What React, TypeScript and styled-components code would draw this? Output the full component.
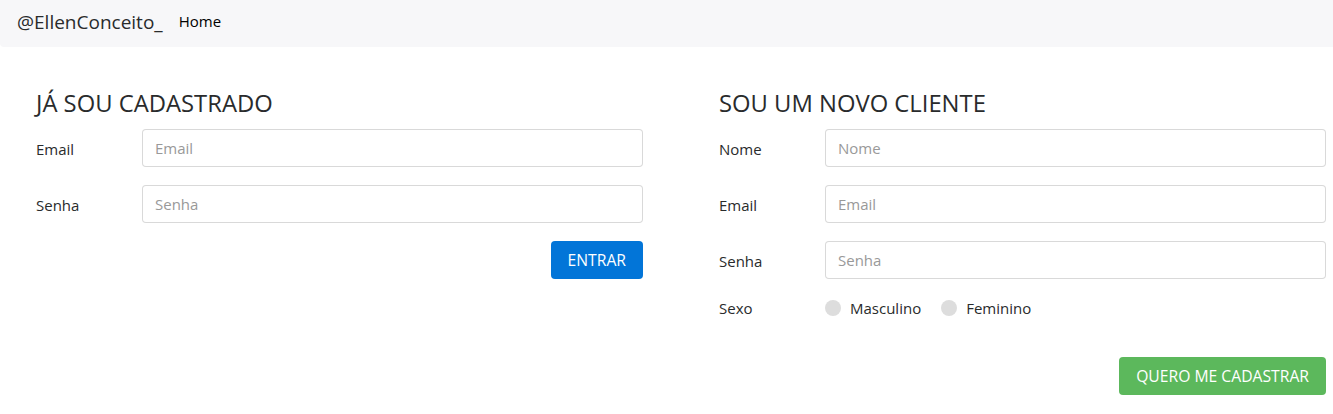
import React from "react";
import styled, { createGlobalStyle } from "styled-components";

const Global = createGlobalStyle`
  html, body { margin: 0; padding: 0; background: #fff; }
  body {
    font-family: "Open Sans", "Noto Sans", sans-serif;
    font-size: 15px;
    color: #292b2c;
  }
  * { box-sizing: border-box; }
`;

const Navbar = styled.nav`
  display: flex;
  align-items: center;
  height: 47px;
  padding: 0 0 0 17px;
  margin-right: -8px;
  background: #f7f7f9;
  border-radius: 0 0 4px 4px;
`;

const Brand = styled.a`
  font-size: 19px;
  color: #292b2c;
  margin-right: 16px;
  text-decoration: none;
  padding-bottom: 4px;
`;

const NavLink = styled.a`
  font-size: 15px;
  color: #000;
  text-decoration: none;
  padding-bottom: 5px;
`;

const Main = styled.main`
  display: grid;
  grid-template-columns: 1fr 1fr;
  column-gap: 76px;
  padding: 42px 7px 0 36px;
`;

const Column = styled.section`
  display: flex;
  flex-direction: column;
`;

const Title = styled.h2`
  margin: 0 0 12px;
  font-size: 23.8px;
  font-weight: 400;
  line-height: 28px;
  color: #292b2c;
`;

const Row = styled.div`
  display: flex;
  align-items: center;
  margin-bottom: 18px;
`;

const Label = styled.label<{ $pad?: number }>`
  flex: 0 0 106px;
  padding-top: ${(p) => (p.$pad ?? 1)}px;
  font-size: 15px;
  color: #292b2c;
`;

const Input = styled.input`
  flex: 1;
  height: 38px;
  padding: 0 12px;
  border: 1px solid rgba(0, 0, 0, 0.15);
  border-radius: 4px;
  font: inherit;
  font-size: 15px;
  color: #464a4c;
  &::placeholder { color: #999; }
`;

const Actions = styled.div<{ $top: number }>`
  display: flex;
  justify-content: flex-end;
  margin-top: ${(p) => p.$top}px;
`;

const Button = styled.button<{ $color: string }>`
  height: 38px;
  padding: 0 17px;
  border: none;
  border-radius: 4px;
  background: ${(p) => p.$color};
  color: #fff;
  font: inherit;
  font-size: 15.7px;
  cursor: pointer;
`;

const Radios = styled.div`
  display: flex;
  align-items: center;
  gap: 20px;
`;

const RadioOption = styled.label`
  display: flex;
  align-items: center;
  gap: 9px;
  font-size: 15px;
  color: #292b2c;
`;

const Dot = styled.span`
  width: 16px;
  height: 16px;
  border-radius: 50%;
  background: #ddd;
`;

const SexRow = styled(Row)`
  height: 22px;
  margin-bottom: 0;
`;

export default function App() {
  return (
    <>
      <Global />
      <Navbar>
        <Brand href="#">@EllenConceito_</Brand>
        <NavLink href="#">Home</NavLink>
      </Navbar>
      <Main>
        <Column>
          <Title>JÁ SOU CADASTRADO</Title>
          <Row>
            <Label>Email</Label>
            <Input placeholder="Email" />
          </Row>
          <Row>
            <Label>Senha</Label>
            <Input placeholder="Senha" type="password" />
          </Row>
          <Actions $top={0}>
            <Button $color="#0275d8">ENTRAR</Button>
          </Actions>
        </Column>
        <Column>
          <Title>SOU UM NOVO CLIENTE</Title>
          <Row>
            <Label>Nome</Label>
            <Input placeholder="Nome" />
          </Row>
          <Row>
            <Label>Email</Label>
            <Input placeholder="Email" />
          </Row>
          <Row>
            <Label>Senha</Label>
            <Input placeholder="Senha" type="password" />
          </Row>
          <SexRow>
            <Label $pad={0}>Sexo</Label>
            <Radios>
              <RadioOption><Dot />Masculino</RadioOption>
              <RadioOption><Dot />Feminino</RadioOption>
            </Radios>
          </SexRow>
          <Actions $top={38}>
            <Button $color="#5cb85c">QUERO ME CADASTRAR</Button>
          </Actions>
        </Column>
      </Main>
    </>
  );
}
